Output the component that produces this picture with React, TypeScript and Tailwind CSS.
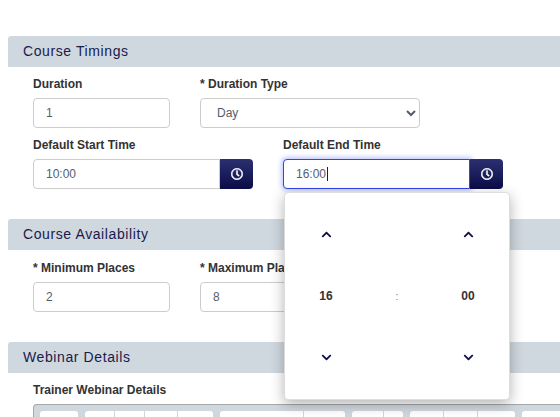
import { FaRegClock, FaChevronUp, FaChevronDown } from 'react-icons/fa';

const inputClass =
  'h-[30px] rounded-[4px] border border-[#cccccc] bg-white px-[12px] text-[12px] text-[#555e68] outline-none';

const SectionHeader = ({ title }: { title: string }) => (
  <div className="flex h-[31px] items-center rounded-tl-[3px] bg-[#d0d8df] pl-[15px] text-[14px] tracking-[0.6px] text-[#1a1a4b]">
    {title}
  </div>
);

const Label = ({ children }: { children: React.ReactNode }) => (
  <label className="block h-[14px] text-[12px] leading-[14px] font-bold text-[#333333]">{children}</label>
);

const TimeField = ({ label, value, active }: { label: string; value: string; active?: boolean }) => (
  <div className="w-[220px]">
    <Label>{label}</Label>
    <div className="mt-[7px] flex h-[30px]">
      <div
        className={
          active
            ? 'flex w-[187px] items-center rounded-l-[4px] border border-[#2f45e8] bg-white pl-[12px] text-[12px] text-[#555e68] shadow-[0_0_4px_2px_rgba(90,100,255,0.35)]'
            : 'flex w-[187px] items-center rounded-l-[4px] border border-[#cccccc] bg-white pl-[12px] text-[12px] text-[#555e68]'
        }
      >
        {value}
        {active && <span className="ml-px h-[14px] w-px bg-[#222222]" />}
      </div>
      <button className="flex w-[33px] items-center justify-center rounded-r-[4px] bg-gradient-to-b from-[#2c3070] to-[#0b0b48] text-white">
        <FaRegClock className="h-[12px] w-[12px] stroke-[20px]" />
      </button>
    </div>
  </div>
);

const Spinner = ({ value }: { value: string }) => (
  <div className="flex h-full w-[26px] flex-col items-center justify-between">
    <FaChevronUp className="h-[11px] w-[11px] text-[#10104a]" />
    <span className="text-[12px] font-bold text-[#333333]">{value}</span>
    <FaChevronDown className="h-[11px] w-[11px] text-[#10104a]" />
  </div>
);

const TimePopup = () => (
  <div className="absolute top-[192px] left-[284px] z-10 h-[208px] w-[226px] rounded-[4px] border border-[#dddddd] bg-white py-[36px] pr-[28px] pl-[28px] shadow-[0_4px_14px_rgba(0,0,0,0.3)]">
    <div className="flex h-full items-stretch justify-between">
      <Spinner value="16" />
      <div className="flex items-center text-[10px] text-[#777777]">:</div>
      <Spinner value="00" />
    </div>
  </div>
);

const toolbarGroups = [[38], [30, 30, 33, 35], [84, 41], [32, 19], [34, 34, 37], [60]];

export default function App() {
  return (
    <div className="relative h-[417px] w-[560px] overflow-hidden bg-white pt-[36px] pl-[8px] font-['Liberation_Sans',Arial,sans-serif]">
      <SectionHeader title="Course Timings" />
      <div className="pt-[10px] pl-[25px]">
        <div className="flex gap-[30px]">
          <div>
            <Label>Duration</Label>
            <input readOnly value="1" className={`${inputClass} mt-[7px] block w-[137px]`} />
          </div>
          <div>
            <Label>* Duration Type</Label>
            <select className={`${inputClass} mt-[7px] block w-[220px]`}>
              <option>Day</option>
            </select>
          </div>
        </div>
        <div className="mt-[10px] flex gap-[30px]">
          <TimeField label="Default Start Time" value="10:00" />
          <TimeField label="Default End Time" value="16:00" active />
        </div>
      </div>

      <div className="mt-[30px]">
        <SectionHeader title="Course Availability" />
      </div>
      <div className="pt-[11px] pl-[25px]">
        <div className="flex gap-[30px]">
          <div>
            <Label>* Minimum Places</Label>
            <input readOnly value="2" className={`${inputClass} mt-[7px] block w-[137px]`} />
          </div>
          <div>
            <Label>* Maximum Places</Label>
            <input readOnly value="8" className={`${inputClass} mt-[7px] block w-[220px]`} />
          </div>
        </div>
      </div>

      <div className="mt-[30px]">
        <SectionHeader title="Webinar Details" />
      </div>
      <div className="pt-[10px] pl-[25px]">
        <Label>Trainer Webinar Details</Label>
        <div className="mt-[7px] flex h-[40px] gap-[7px] rounded-tl-[4px] border-t border-l border-[#a8a8a8] bg-[#d0d8df] pt-[6px] pl-[6px]">
          {toolbarGroups.map((group, i) => (
            <div key={i} className="flex h-[30px] shrink-0 divide-x divide-[#d0d8df] rounded-[3px] bg-white">
              {group.map((width, j) => (
                <div key={j} style={{ width }} className="h-full" />
              ))}
            </div>
          ))}
        </div>
      </div>

      <TimePopup />
    </div>
  );
}
